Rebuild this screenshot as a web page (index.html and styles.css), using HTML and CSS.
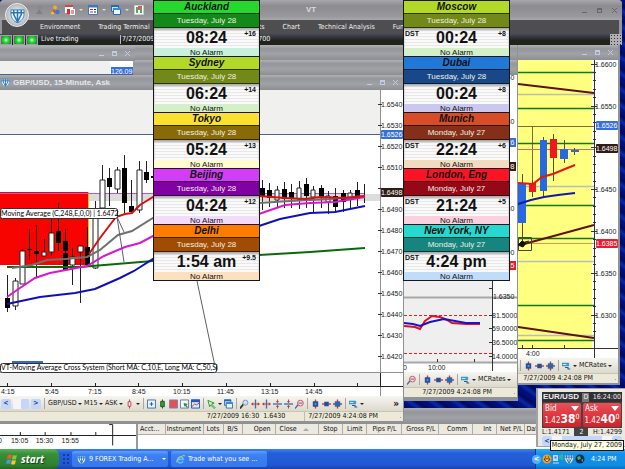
FILE: index.html
```html
<!DOCTYPE html>
<html lang="en">
<head>
    <meta charset="UTF-8">
    <meta name="viewport" content="width=device-width, initial-scale=1.0">
    <title>VT</title>
    <link rel="stylesheet" href="styles.css">
</head>
<body>
<svg class="defs" aria-hidden="true">
    <symbol id="shield" viewBox="0 0 16 16">
        <path d="M1 2h14v4c0 5-3 8-7 10C4 14 1 11 1 6z" fill="#eef4fa" stroke="#3c80b0"/>
        <path d="M4 2v5l4 8 4-8V2M8 2v12M1 5h14" fill="none" stroke="#2878b4" stroke-width="1.6"/>
    </symbol>
    <symbol id="people" viewBox="0 0 10 10">
        <circle cx="5" cy="2.5" r="2" fill="#f0b020"/><path d="M1 8l3-4 3 4z" fill="#e05028"/><circle cx="7.500" cy="7" r="2.200" fill="#3878d8"/><circle cx="2.500" cy="8" r="1.600" fill="#f0c030"/>
    </symbol>
    <symbol id="people-off" viewBox="0 0 10 10">
        <circle cx="5" cy="2.500" r="2" fill="#888"/><path d="M1 9l3-5 4 5z" fill="#808084"/>
    </symbol>
    <symbol id="order" viewBox="0 0 10 10">
        <path d="M0 0h8v8H0z" fill="#fff"/><path d="M0 0h8v2H0z" fill="#e04040"/><path d="M2 4h5v5H2z" fill="#d83030"/><path d="M5 4h5v6H5z" fill="#fff"/><path d="M6 6h3M6 8h3" stroke="#d03030"/>
    </symbol>
    <symbol id="list" viewBox="0 0 10 10">
        <path d="M.5.5h9v9h-9z" fill="#fff" stroke="#3878c8"/><path d="M0 0h10v2.500H0z" fill="#3878c8"/><path d="M2 4.500h3M2 7h3" stroke="#d03030"/><path d="M6 4.500h2M6 7h2" stroke="#222"/>
    </symbol>
    <symbol id="wins" viewBox="0 0 10 10">
        <path d="M.5.500h7v6h-7z" fill="#cfe4fa" stroke="#2868b8"/><path d="M0 0h8v2H0z" fill="#2868b8"/><path d="M2.500 3.500h7v6h-7z" fill="#eef6ff" stroke="#2868b8"/><path d="M2 3h8v2H2z" fill="#3890d8"/>
    </symbol>
    <symbol id="bars" viewBox="0 0 10 10">
        <path d="M.5.500h9v9h-9z" fill="#fff" stroke="#ccc"/><path d="M3 2v6M7 3v5" stroke="#208830" stroke-width="1.500"/><path d="M5 1v4M7 1v2" stroke="#d02020" stroke-width="1.500"/>
    </symbol>
    <symbol id="cross" viewBox="0 0 10 10">
        <path d="M.5.500h9v9h-9z" fill="#e8f2fc" stroke="#3868b0"/><path d="M5 3v4M3 5h4" stroke="#205090"/>
    </symbol>
    <symbol id="gcandle" viewBox="0 0 10 10">
        <path d="M5 0v10" stroke="#185018"/><path d="M3 2h4v6H3z" fill="#30a030" stroke="#185018"/>
    </symbol>
    <symbol id="redbox" viewBox="0 0 10 10">
        <path d="M.5.500h9v9h-9z" fill="#e85050" stroke="#6888c8"/>
    </symbol>
    <symbol id="pick" viewBox="0 0 10 10">
        <path d="M.5.500h9v9h-9z" fill="#f4f8ff" stroke="#5878a8"/><path d="M4 4l5 1-2 1 2 3-2 0-1-2-1 1z" fill="#209030"/>
    </symbol>
    <symbol id="graph" viewBox="0 0 10 10">
        <path d="M.5.500h9v9h-9z" fill="#dcecff" stroke="#2050a0"/><path d="M0 0h10v3H0z" fill="#2858b0"/><path d="M1 8l3-3 2 1 3-2" fill="none" stroke="#d02020"/>
    </symbol>
    <symbol id="cursor" viewBox="0 0 10 10">
        <path d="M1 1l7 3-3 1 4 4-1 1-4-4-1 2z" fill="#d8f4d0" stroke="#289028"/>
    </symbol>
    <symbol id="lens" viewBox="0 0 10 10">
        <path d="M0 10l4-5" stroke="#333" stroke-width="2"/><circle cx="6" cy="3.500" r="2.800" fill="#c8e4f8" stroke="#7090b0"/>
    </symbol>
    <symbol id="lens-red" viewBox="0 0 10 10">
        <path d="M0 10l4-5" stroke="#4868a8" stroke-width="1.500"/><circle cx="6" cy="4" r="3.200" fill="#f6d8d8" stroke="#c05058"/><path d="M4 4h4" stroke="#3060c0"/>
    </symbol>
    <symbol id="split-v" viewBox="0 0 10 10">
        <path d="M5 0v10" stroke="#2878b8" stroke-width="1.500"/><path d="M0 5l2.500-2v4zM10 5L7.500 3v4z" fill="#d03030"/><path d="M1 5h8" stroke="#d03030"/>
    </symbol>
    <symbol id="split-h" viewBox="0 0 10 10">
        <path d="M0 5h10" stroke="#2878b8" stroke-width="1.500"/><path d="M5 4L3 2h4zM5 6L3 8h4z" fill="#d03030"/><path d="M5 0v3M5 7v3" stroke="#d03030"/>
    </symbol>
    <symbol id="sq-v" viewBox="0 0 10 10">
        <path d="M5 0v10" stroke="#d03030" stroke-width="1.500"/><path d="M2 2h6v6H2z" fill="#2050a0"/><path d="M4 4h2v2H4z" fill="#58a0e8"/>
    </symbol>
    <symbol id="sq-h" viewBox="0 0 10 10">
        <path d="M0 5h10" stroke="#d03030" stroke-width="1.500"/><path d="M2.500 2.500h5v5h-5z" fill="#2050a0"/>
    </symbol>
    <symbol id="sq-x" viewBox="0 0 10 10">
        <path d="M0 5h10M5 0v10" stroke="#d03030" stroke-width="1.500"/><path d="M2 2h6v6H2z" fill="#2868b0"/>
    </symbol>
    <symbol id="tmpl" viewBox="0 0 12 10">
        <path d="M0 1h9v4H0z" fill="#38a0d0" stroke="#2070a8" stroke-width=".5"/><path d="M1 3h5" stroke="#fff"/><path d="M4 7h4v2h3" fill="none" stroke="#2060a0" stroke-width="1.500"/>
    </symbol>
    <symbol id="flag" viewBox="0 0 12 12">
        <path d="M2 2q2-1 4 0L5 6Q3 5 1 6z" fill="#f05a28"/><path d="M7 2q2 1 4 0l-1 4q-2 1-4 0z" fill="#8cc63e"/><path d="M1 7q2-1 4 0l-1 4q-2-1-4 0z" fill="#3c9cf0"/><path d="M6 7q2 1 4 0l-1 4q-2 1-4 0z" fill="#fcc820"/>
    </symbol>
    <symbol id="ie" viewBox="0 0 12 12">
        <path d="M9.500 8.500A4 4 0 1 1 10 6H3" fill="none" stroke="#58c0fc" stroke-width="2"/><path d="M1 10Q-1 8 6 3t5-1" fill="none" stroke="#f8d048"/>
    </symbol>
</svg>

<main class="desktop">
    <!-- windows behind the charts -->
    <section class="window back-window">
        <div class="titlebar"></div>
        <div class="titlebar"></div>
    </section>
    <section class="window rate-window">
        <div class="titlebar">
            <span class="controls"><button aria-label="Minimize"></button><button aria-label="Maximize"></button><button aria-label="Close"></button></span>
        </div>
        <div class="rate-body"><span class="rate-tag">126.09</span></div>
    </section>

    <!-- trading application -->
    <header class="window app">
        <div class="app-title">
            <nav class="quick">
                <button aria-label="Log in"><svg><use href="#people-off"/></svg></button>
                <button aria-label="Accounts"><svg><use href="#people"/></svg></button>
                <button class="drop" aria-label="Order"><svg><use href="#order"/></svg></button>
                <button class="drop" aria-label="List"><svg><use href="#list"/></svg></button>
                <button class="drop" aria-label="Windows"><svg><use href="#wins"/></svg></button>
                <button aria-label="Chart"><svg><use href="#bars"/></svg></button>
            </nav>
            <h1>VT</h1>
            <span class="controls"><button aria-label="Minimize"></button><button aria-label="Maximize"></button><button aria-label="Close"></button></span>
        </div>
        <nav class="menu">
            <a href="#">Environment</a>
            <a href="#">Trading Terminal</a>
            <a href="#">Dealing Reports</a>
            <a href="#">Accounts</a>
            <a href="#">Chart</a>
            <a href="#">Technical Analysis</a>
            <a href="#">Functions</a>
        </nav>
        <div class="live">
            <i class="led"></i><i class="led"></i><i class="led"></i>
            <span class="live-text">Live trading</span>
            <span class="live-date">7/27/2009 4:24:08 PM</span>
            <span class="live-account">Account: 104700</span>
            <i class="live-grip"></i>
        </div>
        <div class="orb"><svg><use href="#shield"/></svg></div>
    </header>

    <!-- order terminal -->
    <section class="window terminal">
        <div class="titlebar"></div>
        <div class="terminal-body">
            <svg class="mini-chart" viewBox="0 424 137 25">
                <path d="M0 435.500h137M20.500 432v3M45.500 432v3M71.500 432v3M96.500 432v3M110 424.500h3.500v21" stroke="#222" fill="none"/>
                <text x="-2" y="443">0</text><text x="11" y="443">15:05</text><text x="36" y="443">15:30</text><text x="62" y="443">15:55</text>
            </svg>
            <div class="orders">
                <table>
                    <thead>
                        <tr>
                            <th class="c-acct">Acct...</th><th class="c-inst">Instrument</th><th class="c-lots">Lots</th><th class="c-bs">B/S</th>
                            <th class="c-open">Open</th><th class="c-close">Close <i class="sort"></i></th><th class="c-stop">Stop</th><th class="c-limit">Limit</th>
                            <th class="c-pips">Pips P/L</th><th class="c-gross">Gross P/L</th><th class="c-comm">Comm</th><th class="c-int">Int</th>
                            <th class="c-net">Net P/L</th><th class="c-date">Date</th>
                        </tr>
                    </thead>
                </table>
            </div>
        </div>
    </section>

    <!-- GBP/USD 15 minute -->
    <section class="window chart-main">
        <div class="titlebar">
            <svg class="tb-icon"><use href="#shield"/></svg>
            <h2>GBP/USD, 15-Minute, Ask</h2>
            <span class="controls"><button aria-label="Minimize"></button><button aria-label="Maximize"></button><button aria-label="Close"></button></span>
        </div>
        <svg class="plot" viewBox="0 90 403 306">
            <path d="M0 90h380v44H0z" fill="#f0f0ef"/>
            <path d="M0 134.500h380" stroke="#50608c"/>
            <path d="M88 194h292v7H88z" fill="#dcdcdc"/>
            <path d="M0 192h88v73H0z" fill="#f80400"/>
            <path d="M88.500 192v74" stroke="#e8c020"/>
            <path d="M0 193.500h365" stroke="#b060c0"/>
            <path d="M12 361h31v2H12z" fill="#3868c0"/>
            <g class="wicks">
                <path d="M7.500 275v37M15.500 278v32M22.500 249v35M29.500 229v31M36.500 225v53M44.500 239v17M51.500 218v38M58.500 203v48M65.500 229v42M72.500 248v37M80.500 245v58M87.500 227v40M95.500 201v68M102.500 165v43M109.500 168v38M117.500 167v26M124.500 155v58M131.500 180v32M139.500 161v52M146.500 161v22"/>
                <path d="M262.500 180v30M269.500 183v24M277.500 186v22M284.500 182v26M291.500 184v24M299.500 181v28M306.500 178v30M313.500 186v26M321.500 185v23M328.500 191v23M335.500 188v24M343.500 190v22M350.500 190v18M357.500 182v24M364.500 184v19"/>
            </g>
            <g class="hollow">
                <path d="M13 281h5v25h-5zM20 251h5v33h-5zM42 252h4v4h-4zM49 233h5v19h-5zM70 257h5v8h-5zM78 246h5v6h-5zM93 215h5v53h-5zM100 180h5v28h-5zM115 170h5v19h-5zM137 170h5v40h-5z"/>
                <path d="M275 190h4v10h-4zM297 188h4v11h-4zM311 190h4v7h-4zM326 196h4v6h-4zM348 193h4v6h-4z"/>
            </g>
            <path d="M5 298h5v10H5zM27 249h5v1h-5zM34 251h5v3h-5zM56 231h5v12h-5zM63 241h5v10h-5zM63 253h5v17h-5zM85 247h5v18h-5zM107 178h5v9h-5zM122 168h5v35h-5zM129 206h5v6h-5zM144 172h5v8h-5zM151 176h3v2h-3zM260 188h5v9h-5zM267 190h5v8h-5zM282 189h5v10h-5zM289 192h5v7h-5zM304 184h5v12h-5zM319 188h5v9h-5zM333 196h5v11h-5zM341 193h5v9h-5zM355 190h5v8h-5z"/>
            <g class="avg">
                <path stroke="#0a6a0a" d="M7 267L80 267 153 261 259 255 310 252 365 248"/>
                <path stroke="#1010b8" d="M7 304L40 297 75 293 95 289 120 278 134 271 153 259 200 238 259 226 280 219 310 213 335 212 365 206"/>
                <path stroke="#d818d0" d="M7 297L20 288 35 278 50 273 87 266 104 256 125 247 140 243 153 236 259 214 285 205 310 203 335 202 365 197"/>
                <path stroke="#707070" d="M12 268L32 265 47 260 65 259 87 257 100 250 118 235 132 231 153 218 259 203 290 201 330 199 365 196"/>
                <path stroke="#d81010" d="M89 254L100 238 116 217 125 214 132 213 140 205 153 197 259 196 285 198 305 199 320 197 345 198 365 196"/>
            </g>
            <path d="M117 217l7 45M117 217l7 15M197 281l19 90" stroke="#606060" fill="none"/>
            <path d="M0 372h380v14H0z" fill="#efefef"/>
            <path d="M0 372.500h403M380.500 90v306" stroke="#909090"/>
            <path d="M0 386.500h403M7.500 383v3M51.500 383v3M95.500 383v3M138.500 383v3M182.500 383v3M226.500 383v3M270.500 383v3M314.500 383v3M357.500 383v3M380.500 373v13" stroke="#222"/>
            <path class="ticks" d="M378 104.500h4M378 125.500h4M378 146.500h4M378 167.500h4M378 188.500h4M378 209.500h4M378 230.500h4M378 251.500h4M378 272.500h4M378 293.500h4M378 314.500h4M378 335.500h4M378 356.500h4"/>
            <g class="axis">
                <text x="381" y="107">1.6540</text><text x="381" y="128">1.6530</text><text x="381" y="149">1.6520</text><text x="381" y="170">1.6510</text>
                <text x="381" y="212">1.6490</text><text x="381" y="233">1.6480</text><text x="381" y="254">1.6470</text><text x="381" y="275">1.6460</text>
                <text x="381" y="296">1.6450</text><text x="381" y="317">1.6440</text><text x="381" y="338">1.6430</text><text x="381" y="359">1.6420</text>
            </g>
            <rect x="381" y="130" width="22" height="9" rx="1" fill="#3870d8"/><text class="light" x="381" y="137">1.6526</text>
            <rect x="381" y="188" width="22" height="9" rx="1" fill="#301c14"/><text class="light" x="381" y="195">1.6498</text>
            <rect class="note" x="0.500" y="208.500" width="117" height="10" rx="2"/><text class="note-text" x="1" y="216">Moving Average (C,248,E,0,0) | 1.6472</text>
            <rect class="note" x="0.500" y="363.500" width="216" height="9" rx="2"/><text class="note-text" x="1" y="370">VT-Moving Average Cross System (Short MA: C,10,E, Long MA: C,50,S)</text>
            <g class="axis">
                <text x="1" y="394">4:15</text><text x="45" y="394">5:45</text><text x="88" y="394">7:15</text><text x="132" y="394">8:45</text><text x="173" y="394">10:15</text>
                <text x="217" y="394">11:45</text><text x="261" y="394">13:15</text><text x="305" y="394">14:45</text>
            </g>
        </svg>
        <div class="toolbar">
            <button class="scroll" aria-label="Back">&lt;</button>
            <input class="slider" type="range" value="100" aria-label="Scroll chart">
            <button class="scroll" aria-label="Forward">&gt;</button>
            <i class="sep"></i>
            <label class="pick"><select aria-label="Instrument"><option>GBP/USD</option></select></label>
            <label class="pick"><select aria-label="Period"><option>M15</option></select></label>
            <label class="pick"><select aria-label="Price"><option>ASK</option></select></label>
            <button class="drop dark" aria-label="Style"><svg viewBox="0 0 10 10"><path d="M5 0v10" stroke="#c83030"/><path d="M3.500 2.500h3v5h-3z" fill="#fff" stroke="#d03030"/></svg></button>
            <i class="sep"></i>
            <button aria-label="Crosshair"><svg><use href="#cross"/></svg></button>
            <button aria-label="Candles"><svg><use href="#gcandle"/></svg></button>
            <button aria-label="Fill"><svg><use href="#redbox"/></svg></button>
            <button aria-label="Pick"><svg><use href="#pick"/></svg></button>
            <button aria-label="Indicator"><svg><use href="#graph"/></svg></button>
            <i class="sep"></i>
            <button class="drop dark" aria-label="Cursor"><svg><use href="#cursor"/></svg></button>
            <button aria-label="Windows"><svg><use href="#wins"/></svg></button>
            <i class="sep"></i>
            <button aria-label="Zoom"><svg><use href="#lens"/></svg></button>
            <button aria-label="Narrow"><svg><use href="#split-v"/></svg></button>
            <button aria-label="Widen"><svg><use href="#split-v"/></svg></button>
            <button aria-label="Shorten"><svg><use href="#split-h"/></svg></button>
            <button aria-label="Heighten"><svg><use href="#split-h"/></svg></button>
            <button aria-label="Zoom area"><svg><use href="#lens-red"/></svg></button>
            <i class="sep"></i>
            <button aria-label="Fit height"><svg><use href="#sq-v"/></svg></button>
            <button aria-label="Fit width"><svg><use href="#sq-h"/></svg></button>
            <button aria-label="Fit all"><svg><use href="#sq-x"/></svg></button>
            <i class="sep"></i>
            <button class="drop dark" aria-label="Template"><svg><use href="#tmpl"/></svg></button>
            <button class="more" aria-label="More">»</button>
        </div>
        <div class="status"><span class="status-cell">7/27/2009 16:30&nbsp; 1.6430</span><span class="status-time">7/27/2009 4:24:08 PM</span><i class="grip"></i></div>
    </section>

    <!-- oscillator window -->
    <section class="window chart-mid">
        <div class="titlebar"></div>
        <svg class="plot" viewBox="404 75 113 297">
            <path d="M404 275h88v87h-88z" fill="#efefef"/>
            <path d="M404 297.500h113M404 362.500h113" stroke="#a8a8a8" stroke-width="2"/>
            <path d="M404 315.500h88M404 353.500h88" stroke="#d02828" stroke-dasharray="3 2"/>
            <g class="avg">
                <path stroke="#e01020" d="M404 326L415 327 420 329 425 321 432 316 440 317 447 320 452 323 466 324 480 324"/>
                <path stroke="#2010c8" d="M404 323L413 324 420 326 430 322 444 319 455 321 466 323 480 323"/>
            </g>
            <path d="M492.500 75v296M437.500 359v3M474.500 359v3M489 288.500h3M489 315.500h3M489 328.500h3M489 342.500h3M489 356.500h3" stroke="#333"/>
            <g class="axis">
                <text x="493" y="80">1.6550</text><text x="493" y="124">1.6530</text><text x="493" y="211">1.6480</text><text x="493" y="255">1.6400</text>
                <text x="493" y="299">1.6350</text>
                <text x="492" y="318">81.5000</text><text x="492" y="331">59.0000</text><text x="492" y="345">36.5000</text><text x="492" y="359">14.0000</text>
                <text x="403" y="370">0</text><text x="428" y="370">10:00</text>
            </g>
            <path d="M493 138h23v9h-23z" fill="#3870d8"/><text class="light" x="493" y="145">1.6526</text>
            <path d="M493 162h23v9h-23z" fill="#301c14"/><text class="light" x="493" y="169">1.6498</text>
            <path d="M493 261h23v9h-23z" fill="#e02030"/><text class="light" x="493" y="268">1.6385</text>
        </svg>
        <div class="toolbar end">
            <button aria-label="Zoom area"><svg><use href="#lens-red"/></svg></button>
            <i class="sep"></i>
            <button aria-label="Fit height"><svg><use href="#sq-v"/></svg></button>
            <button aria-label="Fit width"><svg><use href="#sq-h"/></svg></button>
            <button aria-label="Fit all"><svg><use href="#sq-x"/></svg></button>
            <i class="sep"></i>
            <button class="drop dark" aria-label="Template"><svg><use href="#tmpl"/></svg></button>
            <label class="pick"><select aria-label="Template name"><option>MCRates</option></select></label>
        </div>
        <div class="status"><span class="status-time">7/27/2009 4:24:08 PM</span><i class="grip"></i></div>
    </section>

    <!-- yellow chart -->
    <section class="window chart-yellow">
        <div class="titlebar">
            <span class="controls"><button aria-label="Minimize"></button><button aria-label="Maximize"></button><button aria-label="Close"></button></span>
        </div>
        <svg class="plot" viewBox="518 60 100 298">
            <path d="M518 60h74v288h-74z" fill="#ffff80"/>
            <path d="M518 94.500h76M518 186.500h76M518 261.500h76M518 335.500h76" stroke="#bcbcbc" stroke-width="1.500"/>
            <path d="M518 126.500h76M532.500 126v54" stroke="#806840"/>
            <path d="M518 72.500h76M518 108.500h76M518 143.500h76M518 205.500h76M518 238.500h76M518 305.500h76M518 340.500h76" stroke="#107810" stroke-width="1.500"/>
            <path d="M518 149.500h76" stroke="#e06858"/>
            <path d="M518 243.500h76" stroke="#e09848"/>
            <g class="avg"><path stroke="#601010" d="M518 84L594 93M524 244L550 237 594 225M518 327L594 338"/></g>
            <path d="M522.500 174v68M543.500 137v60M553.500 134v47M564.500 140v23M574.500 148v7M532.500 180v17" stroke="#604838"/>
            <path d="M518 183h8v40h-8zM540 140h7v51h-7zM560 149h8v10h-8zM571 150h8v2h-8z" fill="#2868e0"/>
            <path d="M550 139h7v19h-7zM529 183h7v9h-7z" fill="#f01820"/>
            <g class="avg">
                <path stroke="#e01818" d="M518 183L533 184 542 177 553 174 565 169 575 165"/>
                <path stroke="#1018b0" d="M518 204L531 200 544 197 558 195 575 193"/>
            </g>
            <path d="M518.500 237.500h13v13h-13z" fill="none" stroke="#444"/><path d="M518 245l4-4 4 2-3 4zM525 242l4-1" fill="#111" stroke="#111"/>
            <path d="M594.500 60v298M518 348.500h100M522.500 345v3M532.500 345v3M564.500 345v3M591 64.500h6M591 106.500h6M591 147.500h6M591 189.500h6M591 231.500h6M591 273.500h6M591 315.500h6M593 72.500h3M593 80.500h3M593 89.500h3M593 97.500h3M593 114.500h3M593 122.500h3M593 131.500h3M593 139.500h3M593 156.500h3M593 164.500h3M593 172.500h3M593 181.500h3M593 197.500h3M593 206.500h3M593 214.500h3M593 222.500h3M593 239.500h3M593 248.500h3M593 256.500h3M593 264.500h3M593 281.500h3M593 289.500h3M593 298.500h3M593 306.500h3M593 323.500h3M593 331.500h3" stroke="#333"/>
            <g class="axis">
                <text x="595" y="67">1.6600</text><text x="595" y="109">1.6550</text><text x="595" y="192">1.6450</text>
                <text x="595" y="234">1.6400</text><text x="595" y="276">1.6350</text><text x="595" y="318">1.6300</text><text x="526" y="356">4:00</text>
            </g>
            <rect x="596" y="121" width="22" height="9" rx="1" fill="#3870d8"/><text class="light" x="596" y="128">1.6526</text>
            <rect x="596" y="144" width="22" height="9" rx="1" fill="#301c14"/><text class="light" x="596" y="151">1.6498</text>
            <rect x="596" y="239" width="22" height="9" rx="1" fill="#e02030"/><text class="light" x="596" y="246">1.6385</text>
        </svg>
        <div class="toolbar end">
            <button aria-label="Zoom area"><svg><use href="#lens-red"/></svg></button>
            <i class="sep"></i>
            <button aria-label="Fit height"><svg><use href="#sq-v"/></svg></button>
            <button aria-label="Fit width"><svg><use href="#sq-h"/></svg></button>
            <button aria-label="Fit all"><svg><use href="#sq-x"/></svg></button>
            <i class="sep"></i>
            <button class="drop dark" aria-label="Template"><svg><use href="#tmpl"/></svg></button>
            <label class="pick"><select aria-label="Template name"><option>MCRates</option></select></label>
        </div>
        <div class="status"><span class="status-time">7/27/2009 4:24:08 PM</span><i class="grip"></i></div>
    </section>

    <!-- world clocks -->
    <section class="window clocks clocks-left">
        <article class="clock auckland"><h3>Auckland</h3><p class="date">Tuesday, July 28</p><p class="time"><b>08:24</b><span class="zone">+16</span></p><p class="alarm">No Alarm</p></article>
        <article class="clock sydney"><h3>Sydney</h3><p class="date">Tuesday, July 28</p><p class="time"><b>06:24</b><span class="zone">+14</span></p><p class="alarm">No Alarm</p></article>
        <article class="clock tokyo"><h3>Tokyo</h3><p class="date">Tuesday, July 28</p><p class="time"><b>05:24</b><span class="zone">+13</span></p><p class="alarm">No Alarm</p></article>
        <article class="clock beijing"><h3>Beijing</h3><p class="date">Tuesday, July 28</p><p class="time"><b>04:24</b><span class="zone">+12</span></p><p class="alarm">No Alarm</p></article>
        <article class="clock delhi"><h3>Delhi</h3><p class="date">Tuesday, July 28</p><p class="time"><b>1:54 am</b><span class="zone">+9.5</span></p><p class="alarm">No Alarm</p></article>
    </section>
    <section class="window clocks clocks-right">
        <article class="clock moscow"><h3>Moscow</h3><p class="date">Tuesday, July 28</p><p class="time"><span class="dst">DST</span><b>00:24</b><span class="zone">+8</span></p><p class="alarm">No Alarm</p></article>
        <article class="clock dubai"><h3>Dubai</h3><p class="date">Tuesday, July 28</p><p class="time"><b>00:24</b><span class="zone">+8</span></p><p class="alarm">No Alarm</p></article>
        <article class="clock munich"><h3>Munich</h3><p class="date">Monday, July 27</p><p class="time"><span class="dst">DST</span><b>22:24</b><span class="zone">+6</span></p><p class="alarm">No Alarm</p></article>
        <article class="clock london"><h3>London, Eng</h3><p class="date">Monday, July 27</p><p class="time"><span class="dst">DST</span><b>21:24</b><span class="zone">+5</span></p><p class="alarm">No Alarm</p></article>
        <article class="clock newyork"><h3>New York, NY</h3><p class="date">Monday, July 27</p><p class="time"><span class="dst">DST</span><b>4:24 pm</b></p><p class="alarm">No Alarm</p></article>
    </section>

    <!-- quote -->
    <section class="window quote">
        <div class="quote-head"><b>EUR/USD</b><button>D</button><span>16:24:00</span></div>
        <div class="prices">
            <button class="price"><span class="side">Bid<i></i></span><span class="value">1.42<b>38</b><sup>0</sup></span></button>
            <button class="price"><span class="side">Ask<i></i></span><span class="value">1.42<b>40</b><sup>0</sup></span></button>
        </div>
        <div class="range"><span>L:1.4171</span><i>2</i><span>H:1.4299</span></div>
        <div class="hscroll"><button class="scroll" aria-label="Left">&lt;</button><i></i><button class="scroll" aria-label="Right">&gt;</button></div>
    </section>

    <footer class="taskbar">
        <button class="start"><svg><use href="#flag"/></svg>start</button>
        <i class="dots"></i>
        <button class="task"><svg><use href="#shield"/></svg><span>9 FOREX Trading A...</span><i class="caret"></i></button>
        <button class="task"><svg><use href="#ie"/></svg><span>Trade what you see ...</span></button>
        <div class="tray">
            <button class="expand" aria-label="Show hidden icons">&lt;</button>
            <svg viewBox="0 0 10 10"><circle cx="5" cy="5" r="4.500" fill="#f0a020"/><path d="M2 5h6q-3 5-6 0" fill="#fff" stroke="#702008"/><path d="M3 3h1M6 3h1" stroke="#702008"/></svg>
            <svg viewBox="0 0 10 10"><path d="M0 1h5v6H0z" fill="#b8d8f8"/><path d="M1 2h3v3H1zM0 9h6" fill="#3878c8" stroke="#c8e0f8"/><path d="M7 1v4M9 0v6" stroke="#40e050"/></svg>
            <svg><use href="#shield"/></svg>
            <svg viewBox="0 0 10 10"><circle cx="5" cy="5" r="4.500" fill="#102858"/><path d="M2 3l3-1 1 3-3 1zM6 6l2-1v3z" fill="#38b850"/></svg>
            <time>4:24 PM</time>
        </div>
    </footer>
    <div class="tooltip" role="tooltip">Monday, July 27, 2009</div>
</main>
</body>
</html>
```
FILE: styles.css
```css
* {
    box-sizing: border-box;
}
body {
    margin: 0;
    font: 7px/9px "DejaVu Sans Condensed", "DejaVu Sans", sans-serif;
    color: #111;
}
h1, h2, h3, p {
    margin: 0;
}
button, select {
    margin: 0;
    padding: 0;
    border: 0;
    background: none;
    font: inherit;
    color: inherit;
}
svg {
    display: block;
    flex: none;
}
.defs {
    position: absolute;
    width: 0;
    height: 0;
}
.desktop {
    position: relative;
    min-height: 100vh;
    overflow: hidden;
    background: #000c70 repeating-linear-gradient(35deg, #000c68 0, #0828b0 4px, #000a58 8px, #001088 13px);
}
.window {
    position: absolute;
}

/* title bars */
.titlebar {
    display: flex;
    align-items: center;
    gap: 3px;
    height: 15px;
    padding: 0 5px 0 1px;
    background: linear-gradient(#b0b1b4, #94969b 25%, #a0a2a6 60%, #8c8e94);
    color: #e4e6ea;
}
.titlebar h2 {
    font: bold 8px/10px "Liberation Sans", Arial, sans-serif;
}
.tb-icon {
    width: 9px;
    height: 9px;
}
.controls {
    display: flex;
    gap: 8px;
    margin-left: auto;
}
.controls button {
    width: 5px;
    height: 5px;
    color: #c0cce0;
}
.controls button:nth-child(1) {
    border-bottom: 1px solid;
}
.controls button:nth-child(2) {
    border: 1px solid;
    border-top-width: 2px;
}
.controls button:nth-child(3) {
    background: linear-gradient(45deg, transparent 42%, currentColor 42% 58%, transparent 58%), linear-gradient(-45deg, transparent 42%, currentColor 42% 58%, transparent 58%);
}

/* application frame */
.app {
    top: 0;
    left: 0;
    right: 3px;
    border-radius: 4px 4px 0 0;
    background: #97979b;
}
.app-title {
    position: relative;
    display: flex;
    align-items: center;
    height: 20px;
    padding: 0 5px 0 35px;
    background: linear-gradient(#a8a8ac, #8c8c90 30%, #98989c 80%, #a8a8ac);
    border-radius: inherit;
}
.app-title .controls {
    gap: 10px;
}
.app-title .controls button {
    color: #66686c;
}
.app-title h1 {
    position: absolute;
    left: 0;
    right: 0;
    font: bold 8px/10px "Liberation Sans", Arial, sans-serif;
    text-align: center;
    color: #dcdcde;
}
.quick {
    display: flex;
    gap: 5px;
}
.quick svg {
    width: 10px;
    height: 10px;
}
.drop {
    display: flex;
    align-items: center;
    gap: 2px;
}
.quick .drop {
    gap: 4px;
}
.drop::after, .pick::after, .caret {
    content: "";
    border: 2px solid transparent;
    border-top-color: #ddd;
    border-bottom: 0;
}
.drop.dark::after, .pick::after {
    border-top-color: #222;
}
.menu {
    display: flex;
    align-items: center;
    gap: 18px;
    height: 14px;
    margin: 0 3px 0 2px;
    padding-left: 38px;
    background: #4e4e50;
    white-space: nowrap;
}
.menu a {
    color: #f0f0f0;
    text-decoration: none;
}
.live {
    display: flex;
    align-items: center;
    gap: 1px;
    height: 11px;
    background: linear-gradient(#444a56, #20221e 60%);
    color: #f4f4f4;
    white-space: nowrap;
}
.led {
    width: 12px;
    height: 10px;
    border: 1px solid #a0a4a0;
    background: radial-gradient(circle, #e0ffe0 0, #28e038 35%, #18b828 65%, #606860 75%);
}
.live-text {
    width: 82px;
    padding-left: 2px;
    border-right: 1px solid #bbb;
}
.live-account {
    margin-left: 24px;
}
.live-grip {
    width: 12px;
    height: 11px;
    margin-left: auto;
    background: radial-gradient(circle, #333 1px, transparent 1px) 0 0 / 3px 3px #b0b0b4;
}
.orb {
    position: absolute;
    top: 3px;
    left: 5px;
    display: grid;
    place-items: center;
    width: 24px;
    height: 24px;
    border: 1px solid #eee;
    border-radius: 50%;
    background: radial-gradient(#fff, #c0c4c8 60%, #808488);
}
.orb svg {
    width: 15px;
    height: 15px;
}

/* background windows */
.back-window {
    top: 45px;
    left: 0;
    width: 517px;
}
.rate-window {
    top: 46px;
    left: 0;
    width: 135px;
}
.rate-body {
    display: flex;
    justify-content: flex-end;
    align-items: flex-end;
    height: 14px;
    margin-right: 2px;
    background: linear-gradient(#f0f0ef, #f0f0ef) 0 0 / 110px 100% no-repeat #fff;
    border-bottom: 1px solid #50608c;
}
.rate-tag {
    width: 22px;
    height: 7px;
    overflow: hidden;
    background: #3870d8;
    color: #fff;
    font-family: "Liberation Sans", Arial, sans-serif;
    line-height: 9px;
}

/* charts */
.chart-main, .chart-mid, .chart-yellow {
    display: flex;
    flex-direction: column;
    background: #fff;
    border: solid #909296;
    border-width: 0 1px 2px 0;
}
.chart-main {
    top: 75px;
    left: 0;
    width: 404px;
}
.chart-mid {
    top: 60px;
    left: 404px;
    width: 114px;
    border-bottom-width: 4px;
}
.chart-yellow {
    top: 45px;
    left: 517px;
    width: 103px;
    border-width: 0 2px 2px 1px;
}
.plot, .mini-chart {
    width: 100%;
    font: 7px "Liberation Sans", Arial, sans-serif;
}
.wicks {
    stroke: #222;
    fill: none;
}
.hollow {
    stroke: #222;
    fill: #fff;
}
.avg {
    fill: none;
    stroke-width: 2;
}
.axis, .mini-chart {
    fill: #222;
}
.ticks {
    stroke: #333;
}
.light {
    fill: #fff;
}
.note {
    fill: #fff;
    stroke: #333;
}
.note-text {
    font-family: Lato, sans-serif;
}
.toolbar {
    display: flex;
    align-items: center;
    gap: 2px;
    height: 15px;
    padding: 0 4px 0 1px;
    background: linear-gradient(#f6f5f0, #dcd9cc);
    overflow: hidden;
}
.toolbar svg {
    width: 9px;
    height: 10px;
}
.toolbar.end {
    justify-content: flex-end;
}
.scroll {
    flex: none;
    width: 10px;
    height: 10px;
    border-radius: 2px;
    background: #c4d6fc;
    color: #204080;
    font-weight: bold;
    line-height: 9px;
}
.slider {
    appearance: none;
    width: 16px;
    height: 10px;
    margin: 0;
    background: #f4f4fa;
}
.slider::-webkit-slider-thumb {
    appearance: none;
    width: 8px;
    height: 10px;
    border-radius: 1px;
    background: #c4d6fc;
}
.sep {
    flex: none;
    width: 1px;
    height: 11px;
    margin: 0 1px;
    background: #aaa89c;
}
.pick {
    display: flex;
    align-items: center;
    gap: 1px;
}
.pick select {
    appearance: none;
}
.end .pick {
    margin-right: 2px;
}
.more {
    margin-left: auto;
    font-size: 10px;
    font-weight: bold;
}
.status {
    display: flex;
    align-items: center;
    justify-content: flex-end;
    height: 10px;
    background: #ece9d8;
    border-top: 1px solid #c8c5b8;
    white-space: nowrap;
}
.status-cell {
    padding-right: 19px;
    border-right: 1px solid #c0bdb0;
}
.status-time {
    padding: 0 18px 0 3px;
}
.grip {
    width: 7px;
    height: 7px;
    background: radial-gradient(circle, #a8a598 1px, transparent 1px) 0 0 / 3px 3px;
    clip-path: polygon(100% 0, 100% 100%, 0 100%);
}

/* clocks */
.clocks {
    display: flex;
    flex-direction: column;
    width: 107px;
    border: solid #181818;
    border-width: 0 1px 1px;
    font-family: "Liberation Sans", Arial, sans-serif;
    text-align: center;
}
.clocks-left {
    top: 0;
    left: 153px;
}
.clocks-right {
    top: 0;
    left: 403px;
}
.clock h3 {
    height: 13px;
    border-top: 1px solid #181818;
    font-size: 10px;
    font-style: italic;
    line-height: 12px;
}
.date {
    height: 15px;
    border: solid rgba(0, 0, 0, .6);
    border-width: 1px 0;
    color: #f0f0e0;
    font-size: 8px;
    line-height: 13px;
}
.time {
    position: relative;
    height: 20px;
    background: repeating-linear-gradient(#fafafa 0 2px, #e8e8e8 2px 3px);
    box-shadow: inset 0 2px 2px #aaa;
}
.time b {
    font-size: 16px;
    line-height: 20px;
}
.zone, .dst {
    position: absolute;
    top: 1px;
    right: 3px;
    font-size: 7px;
    font-weight: bold;
}
.dst {
    left: 1px;
    right: auto;
}
.alarm {
    height: 8px;
    font-size: 8px;
    line-height: 9px;
    overflow: hidden;
}
.auckland h3 { background: #24d82c; }
.auckland .date { background: #148818; }
.auckland .alarm { background: #c8f0dc; }
.sydney h3, .moscow h3 { background: #b2d828; }
.sydney .date, .moscow .date { background: #728818; }
.sydney .alarm, .moscow .alarm { background: #d4f0c8; }
.tokyo h3 { background: #fae030; }
.tokyo .date { background: #886a08; }
.tokyo .alarm { background: #fffcd0; }
.beijing h3 { background: #d43cf8; }
.beijing .date { background: #8000a4; }
.beijing .alarm { background: #f2dcfc; }
.delhi h3 { background: #ff7c00; }
.delhi .date { background: #a04c04; }
.delhi .alarm { background: #fce0c0; }
.dubai h3 { background: #2078d8; }
.dubai .date { background: #184888; }
.dubai .alarm { background: #c8c8f0; }
.munich h3 { background: #d84c28; }
.munich .date { background: #843018; }
.munich .alarm { background: #f0dcc0; }
.london h3 { background: #fc1424; }
.london .date { background: #940818; }
.london .alarm { background: #fcd0dc; }
.newyork h3 { background: #28d8d0; }
.newyork .date { background: #188480; }
.newyork .alarm { background: #c0dcf8; }

/* terminal */
.terminal {
    left: 0;
    right: 0;
    bottom: 20px;
}
.terminal .titlebar {
    height: 16px;
}
.terminal-body {
    display: flex;
    height: 25px;
    background: #fff;
}
.mini-chart {
    width: 138px;
    border-right: 2px solid #999;
}
.orders {
    flex: 1;
    min-width: 0;
    overflow: hidden;
}
.orders table {
    width: 100%;
    height: 11px;
    border-collapse: collapse;
    table-layout: fixed;
    background: #ece9e0;
}
.orders th {
    padding: 0 4px;
    border-right: 1px solid #b0aea4;
    border-bottom: 1px solid #b0aea4;
    font-weight: normal;
    text-align: right;
    white-space: nowrap;
}
.orders .c-acct { width: 27px; padding: 0 2px; text-align: left; }
.orders .c-inst { width: 38px; padding: 0; text-align: center; }
.orders .c-lots { width: 20px; padding: 0; text-align: center; }
.orders .c-bs { width: 19px; padding: 0; text-align: center; }
.orders .c-open { width: 33px; }
.orders .c-close { width: 43px; text-align: left; }
.orders .c-stop { width: 24px; }
.orders .c-limit { width: 24px; padding: 0 3px; }
.orders .c-pips { width: 35px; }
.orders .c-gross { width: 37px; padding: 0 2px; }
.orders .c-comm { width: 34px; }
.orders .c-int { width: 24px; }
.orders .c-net { width: 28px; padding: 0 1px; }
.orders .c-date { padding: 0 2px; text-align: left; }
.sort {
    display: inline-block;
    margin-left: 4px;
    border: 3px solid transparent;
    border-top: 0;
    border-bottom-color: #aaa;
}

/* quote */
.quote {
    right: 0;
    bottom: 22px;
    width: 89px;
    padding: 3px 3px 0 4px;
    background: #ece9e0;
    border: solid #a0a2a6;
    border-width: 1px 0 1px 2px;
}
.quote-head {
    display: flex;
    align-items: center;
    justify-content: space-between;
    height: 10px;
    padding: 0 1px;
    background: #303034;
    color: #eee;
}
.quote-head b {
    font: bold 8px/10px "Liberation Sans", Arial, sans-serif;
}
.quote-head button {
    width: 7px;
    background: #777;
}
.prices {
    display: flex;
    gap: 2px;
    padding: 1px;
    background: #444;
}
.price {
    flex: 1;
    height: 24px;
    border-radius: 2px;
    background: linear-gradient(#e85058, #d42028);
    color: #fff;
    text-align: left;
}
.side {
    display: flex;
    align-items: center;
    justify-content: space-between;
    padding: 0 2px;
    font-size: 8px;
}
.side i {
    border: 4px solid transparent;
    border-top: 5px solid #fff;
    border-bottom: 0;
}
.value {
    display: flex;
    align-items: baseline;
    justify-content: center;
    height: 13px;
    font-size: 8px;
    line-height: 13px;
}
.value b {
    font-size: 12px;
}
.value sup {
    font-size: 7px;
    align-self: flex-start;
    line-height: 9px;
}
.range {
    display: flex;
    justify-content: space-between;
    height: 8px;
    line-height: 8px;
}
.range i {
    width: 14px;
    background: #444;
    color: #fff;
    font-style: normal;
    text-align: center;
}
.hscroll {
    display: flex;
    height: 10px;
    background: #f4f4fa;
}
.hscroll i {
    flex: 1;
    margin: 0 10px;
    background: #c4d6fc;
}

/* taskbar */
.taskbar {
    position: absolute;
    left: 0;
    right: 0;
    bottom: 0;
    display: flex;
    align-items: center;
    gap: 3px;
    height: 20px;
    background: linear-gradient(#3c80f0, #2460d8 20%, #2058d4 80%, #1840a8);
    color: #fff;
}
.start {
    display: flex;
    align-items: center;
    gap: 3px;
    width: 59px;
    height: 20px;
    padding-left: 6px;
    border-radius: 0 6px 6px 0;
    background: linear-gradient(#58b058, #389038 25%, #308030 80%, #246824);
    font: italic bold 10px/18px "Open Sans", sans-serif;
    text-shadow: 1px 1px 1px #143c14;
}
.start svg {
    width: 12px;
    height: 12px;
}
.dots {
    width: 7px;
    height: 13px;
    background: radial-gradient(circle, #123c98 1px, transparent 1px) 0 0 / 4px 4px;
}
.task {
    display: flex;
    align-items: center;
    gap: 3px;
    width: 96px;
    height: 16px;
    padding: 0 2px 0 5px;
    border-radius: 2px;
    background: linear-gradient(#60a0fc, #3c80f4 25%, #3878ec);
    white-space: nowrap;
}
.task svg {
    width: 9px;
    height: 9px;
}
.caret {
    margin-left: auto;
    border-top-color: #fff;
}
.tray {
    display: flex;
    align-items: center;
    gap: 1px;
    width: 90px;
    height: 20px;
    margin-left: auto;
    border-left: 1px solid #103c98;
    background: linear-gradient(#28b0f8, #1490ec 25%, #108ce4 80%, #0c70c0);
}
.tray svg {
    width: 10px;
    height: 10px;
}
.tray time {
    padding-left: 5px;
}
.expand {
    width: 9px;
    height: 9px;
    margin-left: -4px;
    border-radius: 50%;
    background: #58b0fc;
    font-weight: bold;
    line-height: 8px;
}
.tooltip {
    position: absolute;
    right: 1px;
    bottom: 18px;
    padding: 0 1px;
    border: 1px solid #111;
    background: #ffffe4;
    line-height: 9px;
    white-space: nowrap;
}
```
